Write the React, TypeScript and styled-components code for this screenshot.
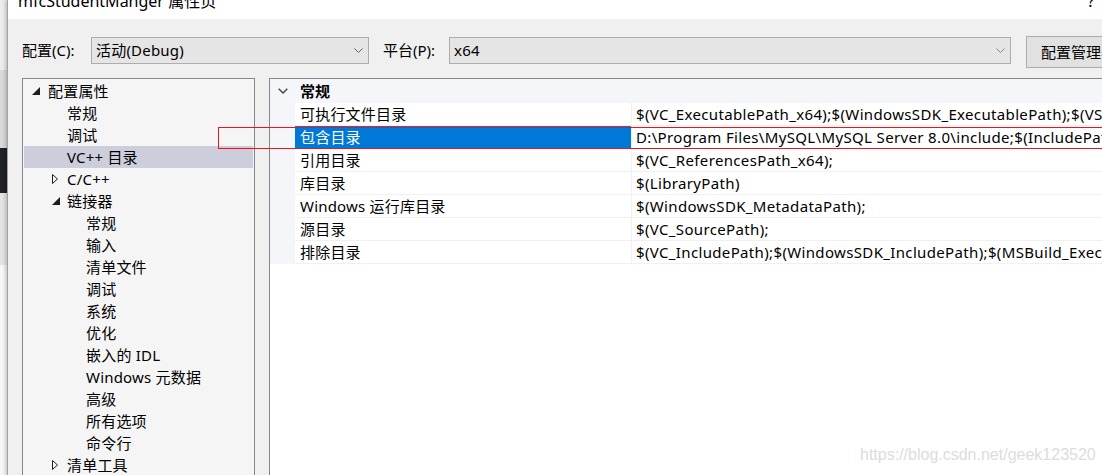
import React from 'react';
import styled, { createGlobalStyle } from 'styled-components';

const GlobalStyle = createGlobalStyle`
  html, body {
    margin: 0;
    padding: 0;
    overflow: hidden;
  }
  body {
    font-family: 'Noto Sans', 'Noto Sans CJK SC', sans-serif;
    font-size: 15px;
    color: #000;
  }
`;

const Screen = styled.div`
  position: relative;
  display: flex;
  width: 1102px;
  height: 475px;
  overflow: hidden;
  background: #f0f0f0;
`;

// the window behind the dialog, only a thin slice of it shows
const Backdrop = styled.div`
  width: 7px;
  flex-shrink: 0;
  display: flex;
  flex-direction: column;
`;

const BackdropBand = styled.div<{ $h?: number; $bg: string }>`
  height: ${(p) => (p.$h ? `${p.$h}px` : 'auto')};
  flex: ${(p) => (p.$h ? '0 0 auto' : '1')};
  background: ${(p) => p.$bg};
`;

const Dialog = styled.div`
  width: 1152px;
  flex-shrink: 0;
  display: flex;
  flex-direction: column;
  background: #f0f0f0;
  border-left: 1px solid #a3a3a3;
  box-shadow: -2px 0 3px rgba(0, 0, 0, 0.18);
`;

const TitleBar = styled.div`
  height: 19px;
  flex-shrink: 0;
  display: flex;
  align-items: flex-start;
  background: #fff;
  padding-left: 10px;
  overflow: hidden;
`;

const TitleText = styled.div`
  flex: 1;
  font-size: 16px;
  line-height: 20px;
  margin-top: -9px;
  white-space: nowrap;
`;

const CaptionButton = styled.div`
  width: 46px;
  flex-shrink: 0;
  text-align: center;
  font-size: 16px;
  line-height: 20px;
  margin-top: -9px;
`;

const Body = styled.div`
  flex: 1;
  min-height: 0;
  display: flex;
  flex-direction: column;
  padding: 17px 0 0 14px;
`;

const ConfigRow = styled.div`
  display: flex;
  align-items: flex-start;
  height: 32px;
  flex-shrink: 0;
`;

const FieldLabel = styled.div<{ $w: number; $gap?: number }>`
  width: ${(p) => p.$w}px;
  flex-shrink: 0;
  margin-left: ${(p) => p.$gap ?? 0}px;
  margin-top: 1px;
  line-height: 27px;
  white-space: nowrap;
`;

const Combo = styled.div<{ $w: number }>`
  box-sizing: border-box;
  width: ${(p) => p.$w}px;
  flex-shrink: 0;
  height: 27px;
  margin-top: 1px;
  display: flex;
  align-items: center;
  justify-content: space-between;
  padding: 0 5px 0 4px;
  border: 1px solid #adadad;
  background: #e5e5e5;
  line-height: 25px;
  letter-spacing: 0.2px;
`;

const ManagerButton = styled.div`
  box-sizing: border-box;
  width: 150px;
  flex-shrink: 0;
  height: 32px;
  margin-left: 15px;
  padding-left: 14px;
  border: 1px solid #adadad;
  background: #e1e1e1;
  line-height: 30px;
  white-space: nowrap;
  overflow: hidden;
`;

const Panels = styled.div`
  flex: 1;
  min-height: 0;
  display: flex;
  gap: 14px;
  margin-top: 10px;
`;

const TreePanel = styled.div`
  box-sizing: border-box;
  width: 233px;
  flex-shrink: 0;
  border: 1px solid #828790;
  border-bottom: none;
  background: #f5f5f5;
  padding: 1px;
  overflow: hidden;
`;

const TreeRow = styled.div<{ $level: number; $selected?: boolean }>`
  height: 22px;
  display: flex;
  align-items: center;
  padding-left: ${(p) => 6 + p.$level * 19}px;
  background: ${(p) => (p.$selected ? '#cccedb' : 'transparent')};
  line-height: 22px;
  letter-spacing: 0.2px;
  white-space: nowrap;
`;

const Expander = styled.div<{ $nudge: number }>`
  width: 18px;
  flex-shrink: 0;
  display: flex;
  align-items: center;
  padding-left: ${(p) => p.$nudge}px;
  box-sizing: border-box;
`;

const GridPanel = styled.div`
  flex: 1;
  min-width: 0;
  display: flex;
  flex-direction: column;
  border: 1px solid #828790;
  border-bottom: none;
  background: #fff;
  overflow: hidden;
`;

const Category = styled.div`
  background: #f4f6fa;
`;

const CategoryHeader = styled.div`
  height: 24px;
  display: flex;
  align-items: center;
`;

const Gutter = styled.div`
  width: 25px;
  flex-shrink: 0;
  display: flex;
  justify-content: center;
`;

const CategoryTitle = styled.div`
  padding-left: 5px;
  font-weight: 700;
  line-height: 24px;
`;

const PropRow = styled.div`
  box-sizing: border-box;
  height: 23px;
  margin-left: 25px;
  display: flex;
  background: #fff;
  border-bottom: 1px solid #f0f0f0;
  line-height: 22px;
  white-space: nowrap;
`;

const NameCell = styled.div<{ $selected?: boolean }>`
  box-sizing: border-box;
  width: 337px;
  flex-shrink: 0;
  padding-left: 5px;
  border-right: 1px solid #f0f0f0;
  letter-spacing: 0.2px;
  background: ${(p) => (p.$selected ? '#0078d7' : 'transparent')};
  color: ${(p) => (p.$selected ? '#fff' : '#000')};
`;

const ValueCell = styled.div`
  flex: 1;
  padding-left: 4px;
  letter-spacing: 0.35px;
  overflow: hidden;
`;

const Annotation = styled.div`
  position: absolute;
  left: 218px;
  top: 127px;
  width: 1000px;
  height: 20px;
  border: 1px solid #e8141e;
  pointer-events: none;
`;

const Watermark = styled.div`
  position: absolute;
  left: 860px;
  top: 446px;
  font-family: 'Liberation Sans', Arial, sans-serif;
  font-size: 16px;
  color: #dcdcdc;
  white-space: nowrap;
`;

const Chevron = ({ color = '#606060' }: { color?: string }) => (
  <svg width="9" height="5" viewBox="0 0 9 5">
    <path d="M0.5 0.5 L4.5 4.5 L8.5 0.5" fill="none" stroke={color} strokeWidth="1" />
  </svg>
);

const Expanded = () => (
  <svg width="8" height="8" viewBox="0 0 8 8">
    <polygon points="8,0 8,8 0,8" fill="#1e1e1e" />
  </svg>
);

const Collapsed = () => (
  <svg width="6" height="10" viewBox="0 0 6 10">
    <polygon points="0.5,0.5 5.5,5 0.5,9.5" fill="none" stroke="#1e1e1e" strokeWidth="1" />
  </svg>
);

type TreeItem = { text: string; level: number; state?: 'open' | 'closed'; selected?: boolean };

const treeItems: TreeItem[] = [
  { text: '配置属性', level: 0, state: 'open' },
  { text: '常规', level: 1 },
  { text: '调试', level: 1 },
  { text: 'VC++ 目录', level: 1, selected: true },
  { text: 'C/C++', level: 1, state: 'closed' },
  { text: '链接器', level: 1, state: 'open' },
  { text: '常规', level: 2 },
  { text: '输入', level: 2 },
  { text: '清单文件', level: 2 },
  { text: '调试', level: 2 },
  { text: '系统', level: 2 },
  { text: '优化', level: 2 },
  { text: '嵌入的 IDL', level: 2 },
  { text: 'Windows 元数据', level: 2 },
  { text: '高级', level: 2 },
  { text: '所有选项', level: 2 },
  { text: '命令行', level: 2 },
  { text: '清单工具', level: 1, state: 'closed' },
];

const properties = [
  { name: '可执行文件目录', value: '$(VC_ExecutablePath_x64);$(WindowsSDK_ExecutablePath);$(VS_ExecutablePath);$(MSBuild_ExecutablePath)' },
  { name: '包含目录', value: 'D:\\Program Files\\MySQL\\MySQL Server 8.0\\include;$(IncludePath)', selected: true },
  { name: '引用目录', value: '$(VC_ReferencesPath_x64);' },
  { name: '库目录', value: '$(LibraryPath)' },
  { name: 'Windows 运行库目录', value: '$(WindowsSDK_MetadataPath);' },
  { name: '源目录', value: '$(VC_SourcePath);' },
  { name: '排除目录', value: '$(VC_IncludePath);$(WindowsSDK_IncludePath);$(MSBuild_ExecutablePath);$(VC_LibraryPath_x64)' },
];

export default function App() {
  return (
    <>
      <GlobalStyle />
      <Screen>
        <Backdrop>
          <BackdropBand $h={70} $bg="#ececec" />
          <BackdropBand $h={78} $bg="#d9d9d9" />
          <BackdropBand $h={45} $bg="#1f2226" />
          <BackdropBand $h={72} $bg="#e4e4e4" />
          <BackdropBand $bg="#f7f7f7" />
        </Backdrop>

        <Dialog>
          <TitleBar>
            <TitleText>mfcStudentManger 属性页</TitleText>
            <CaptionButton>?</CaptionButton>
            <CaptionButton />
          </TitleBar>

          <Body>
            <ConfigRow>
              <FieldLabel $w={69}>配置(C):</FieldLabel>
              <Combo $w={278}>
                <span>活动(Debug)</span>
                <Chevron />
              </Combo>
              <FieldLabel $w={66} $gap={14}>平台(P):</FieldLabel>
              <Combo $w={562}>
                <span>x64</span>
                <Chevron color="#8a8a8a" />
              </Combo>
              <ManagerButton>配置管理器(O)...</ManagerButton>
            </ConfigRow>

            <Panels>
              <TreePanel>
                {treeItems.map((item, index) => (
                  <TreeRow key={index} $level={item.level} $selected={item.selected}>
                    <Expander $nudge={item.level === 0 ? 2 : 3}>
                      {item.state === 'open' && <Expanded />}
                      {item.state === 'closed' && <Collapsed />}
                    </Expander>
                    <span>{item.text}</span>
                  </TreeRow>
                ))}
              </TreePanel>

              <GridPanel>
                <Category>
                  <CategoryHeader>
                    <Gutter>
                      <svg width="10" height="6" viewBox="0 0 10 6">
                        <path d="M0.7 0.7 L5 5 L9.3 0.7" fill="none" stroke="#444" strokeWidth="1.4" />
                      </svg>
                    </Gutter>
                    <CategoryTitle>常规</CategoryTitle>
                  </CategoryHeader>
                  {properties.map((prop) => (
                    <PropRow key={prop.name}>
                      <NameCell $selected={prop.selected}>{prop.name}</NameCell>
                      <ValueCell>{prop.value}</ValueCell>
                    </PropRow>
                  ))}
                </Category>
              </GridPanel>
            </Panels>
          </Body>
        </Dialog>

        <Annotation />
        <Watermark>https://blog.csdn.net/geek123520</Watermark>
      </Screen>
    </>
  );
}
